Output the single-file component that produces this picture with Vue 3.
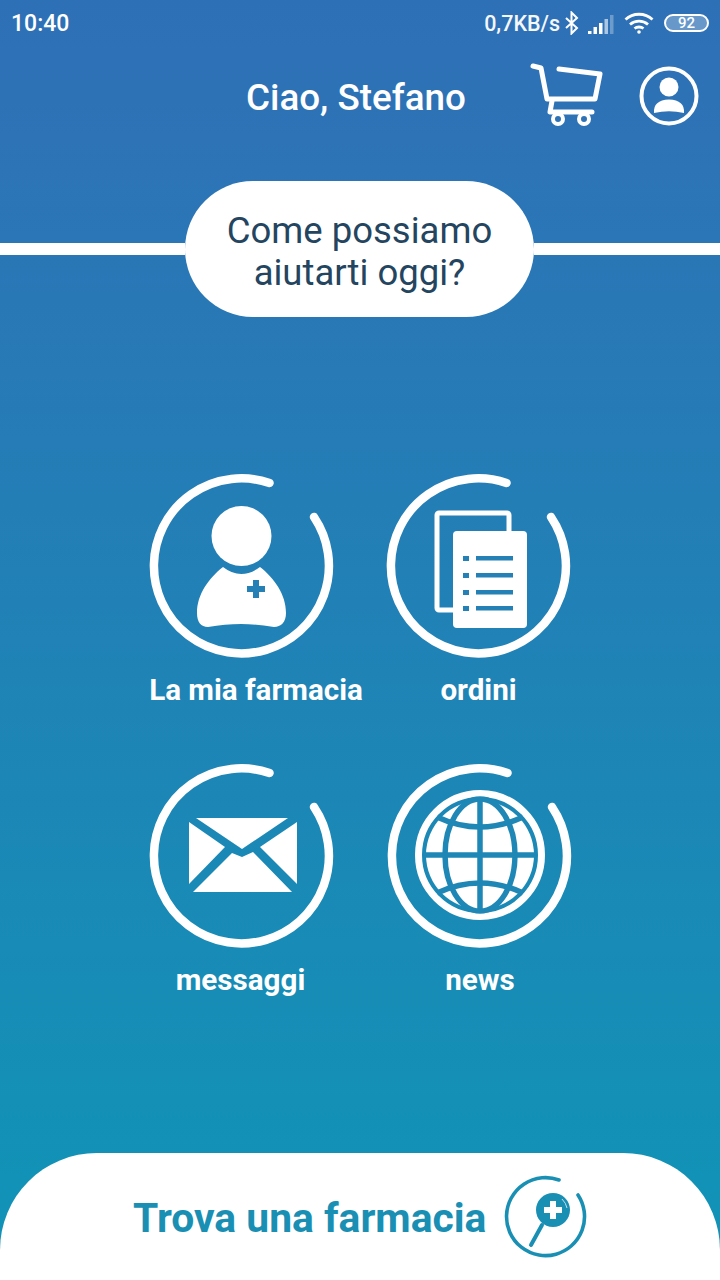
<template>
  <div class="screen">
    <div class="status-bar">
      <span class="clock">10:40</span>
      <div class="status-right">
        <span class="speed">0,7KB/s</span>
        <svg class="bt" width="18" height="24" viewBox="0 0 18 24" fill="none" stroke="#fff" stroke-width="2">
          <path d="M3 7l11 10-5.500 5.500V1.500L14 7 3 17" />
        </svg>
        <svg class="signal" width="28" height="20" viewBox="0 0 28 20" fill="#fff">
          <rect x="0" y="16" width="3.500" height="3" />
          <rect x="5.500" y="12" width="3.500" height="7" />
          <rect x="11" y="8" width="3.500" height="11" />
          <rect x="16.500" y="4" width="3.500" height="15" opacity="0.6" />
          <rect x="22" y="0" width="3.500" height="19" opacity="0.3" />
        </svg>
        <svg class="wifi" width="30" height="22" viewBox="0 0 30 22" fill="none" stroke="#fff" stroke-width="2.800">
          <path d="M1.500 7.500C9 0.500 21 0.500 28.500 7.500" />
          <path d="M6 12.500C11 8 19 8 24 12.500" />
          <path d="M10.500 16.500C13 14.500 17 14.500 19.500 16.500" />
          <circle cx="15" cy="20" r="1.800" fill="#fff" stroke="none" />
        </svg>
        <div class="battery"><span>92</span></div>
      </div>
    </div>

    <header class="top-header">
      <h1 class="greeting">Ciao, Stefano</h1>
      <svg class="cart" width="76" height="66" viewBox="0 0 76 66" fill="none" stroke="#fff" stroke-width="5" stroke-linecap="round" stroke-linejoin="round">
        <path d="M5 5l8 2 6 31h48l5-25-41-5" />
        <path d="M24 40l-2 11h42" />
        <circle cx="30" cy="58" r="5" stroke-width="4" />
        <circle cx="56" cy="58" r="5" stroke-width="4" />
      </svg>
      <svg class="user" width="60" height="60" viewBox="0 0 60 60">
        <circle cx="30" cy="30" r="27.500" fill="none" stroke="#fff" stroke-width="4" />
        <circle cx="30" cy="21" r="9.500" fill="#fff" />
        <path d="M15 47Q14 34 30 33.500Q46 34 45 47Q30 43.500 15 47Z" fill="#fff" />
      </svg>
    </header>

    <div class="question-row">
      <div class="rule rule-left"></div>
      <div class="question">Come possiamo<br />aiutarti oggi?</div>
      <div class="rule"></div>
    </div>

    <main class="tiles">
      <div class="tile">
        <svg class="ring-icon" width="190" height="190" viewBox="0 0 190 190">
          <path :d="ringPath" class="ring" />
          <circle cx="94.500" cy="66" r="30" fill="#fff" />
          <path d="M76 97Q94 111 113 97C127 108 139 124 139 143C139 152 134 157 127 157C104 153 84 153 61 157C54 157 50 152 50 143C50 124 62 108 76 97Z" fill="#fff" />
          <path d="M106 110h6v6h6v6h-6v6h-6v-6h-6v-6h6z" fill="#2580b5" />
        </svg>
        <span class="label label-wide">La mia farmacia</span>
      </div>

      <div class="tile">
        <svg class="ring-icon" width="190" height="190" viewBox="0 0 190 190">
          <path :d="ringPath" class="ring" />
          <path d="M69 140H55a2 2 0 0 1-2-2V45a2 2 0 0 1 2-2h68a2 2 0 0 1 2 2v16" fill="none" stroke="#fff" stroke-width="5" />
          <rect x="69" y="61" width="74" height="97" rx="4" fill="#fff" />
          <g v-for="y in docRows" :key="y" fill="#2580b5">
            <rect x="79" :y="y" width="6" height="5" />
            <rect x="92" :y="y" width="37" height="4.500" />
          </g>
        </svg>
        <span class="label">ordini</span>
      </div>

      <div class="tile">
        <svg class="ring-icon" width="190" height="190" viewBox="0 0 190 190">
          <path :d="ringPath" class="ring" />
          <g fill="#fff">
            <polygon points="49,58 141,58 95,89" />
            <polygon points="42,62 78,87 42,124" />
            <polygon points="150,62 113,87 150,124" />
            <polygon points="46,132 85,93 95,97 106,92 145,132" />
          </g>
        </svg>
        <span class="label label-messages">messaggi</span>
      </div>

      <div class="tile tile-news">
        <svg class="ring-icon" width="190" height="190" viewBox="0 0 190 190">
          <path :d="ringPath" class="ring" />
          <circle cx="95" cy="95" r="61.500" fill="none" stroke="#fff" stroke-width="7" />
          <circle cx="95" cy="95" r="54" fill="#fff" />
          <g fill="none" stroke="#1f87b5" stroke-width="5.500">
            <ellipse cx="95" cy="95" rx="35" ry="56" />
            <path d="M95 39V151M39 95H151" />
            <path d="M52 57Q95 77 138 57M52 133Q95 113 138 133" />
          </g>
        </svg>
        <span class="label">news</span>
      </div>
    </main>

    <footer class="find-bar">
      <span class="find-text">Trova una farmacia</span>
      <svg class="find-icon" width="84" height="84" viewBox="0 0 84 84" fill="none" stroke="#1a8fb4">
        <path d="M55 5A39 39 0 1 0 74 20" stroke-width="3.600" stroke-linecap="round" />
        <path d="M38 50L27 70" stroke-width="4" stroke-linecap="round" />
        <circle cx="49" cy="35" r="17" fill="#1a8fb4" stroke="none" />
        <path d="M46 26h6v6h6v6h-6v6h-6v-6h-6v-6h6z" fill="#fff" stroke="none" />
        <path d="M58 24Q62 28 63 33" stroke="#bfe0ec" stroke-width="1" />
      </svg>
    </footer>
  </div>
</template>

<script setup>
const ringPath = 'M122.500 13A87.500 87.500 0 1 0 167 47'
const docRows = [86, 103, 120, 136]
</script>

<style>
html,
body {
  margin: 0;
  padding: 0;
}
</style>

<style scoped>
.screen {
  width: 720px;
  height: 1280px;
  display: flex;
  flex-direction: column;
  overflow: hidden;
  background: linear-gradient(to bottom, #2e70b6 0%, #2e72b6 8%, #1292b6 92%);
  font-family: Roboto, "Noto Sans", sans-serif;
  color: #fff;
}

/* status bar */
.status-bar {
  height: 46px;
  padding: 0 11px 0 11px;
  display: flex;
  align-items: center;
  justify-content: space-between;
}
.clock {
  font-size: 23px;
  font-weight: 500;
}
.status-right {
  display: flex;
  align-items: center;
}
.speed {
  font-size: 21.500px;
  font-weight: 500;
  opacity: 0.95;
}
.bt {
  margin-left: 3px;
}
.signal {
  margin: 3px 0 0 7px;
}
.wifi {
  margin-left: 8px;
}
.battery {
  margin-left: 10px;
  width: 45px;
  height: 18px;
  box-sizing: border-box;
  border: 2px solid #fff;
  border-radius: 9px;
  background: rgba(255, 255, 255, 0.28);
  display: flex;
  align-items: center;
  justify-content: center;
  font-size: 15px;
  font-weight: 500;
}

/* header */
.top-header {
  height: 102px;
  padding: 0 21px 0 246px;
  display: flex;
  align-items: center;
}
.greeting {
  margin: 0;
  font-size: 36.800px;
  font-weight: 500;
}
.cart {
  margin: -6px 0 0 auto;
}
.user {
  margin: -2px 0 0 35px;
}

/* question */
.question-row {
  margin-top: 33px;
  display: flex;
  align-items: center;
}
.rule {
  flex: 1;
  height: 12px;
  background: #fff;
}
.rule-left {
  flex: 0 0 185px;
}
.question {
  width: 349px;
  height: 136px;
  box-sizing: border-box;
  padding-top: 6px;
  border-radius: 68px;
  background: #fff;
  color: #24455f;
  font-size: 36.500px;
  line-height: 42px;
  text-align: center;
  display: flex;
  align-items: center;
  justify-content: center;
}

/* tiles */
.tiles {
  margin-top: 153px;
  padding-left: 123px;
  display: grid;
  grid-template-columns: 237px 237px;
  grid-auto-rows: 290px;
}
.tile {
  display: flex;
  flex-direction: column;
  align-items: center;
}
.tile-news {
  margin-left: 3px;
}
.ring-icon {
  display: block;
}
.ring {
  fill: none;
  stroke: #fff;
  stroke-width: 8.500;
  stroke-linecap: round;
}
.label {
  margin-top: 13px;
  font-size: 29.600px;
  line-height: 34px;
  font-weight: 700;
  white-space: nowrap;
}
.label-wide {
  margin-left: 29px;
}
.label-messages {
  margin-right: 2px;
}

/* bottom bar */
.find-bar {
  margin-top: auto;
  height: 127px;
  box-sizing: border-box;
  padding: 3px 0 0 133px;
  border-radius: 97px 97px 0 0;
  background: #fff;
  display: flex;
  align-items: center;
}
.find-text {
  font-size: 40.800px;
  font-weight: 700;
  color: #1a8fb4;
}
.find-icon {
  margin: -2px 0 0 18px;
}
</style>
